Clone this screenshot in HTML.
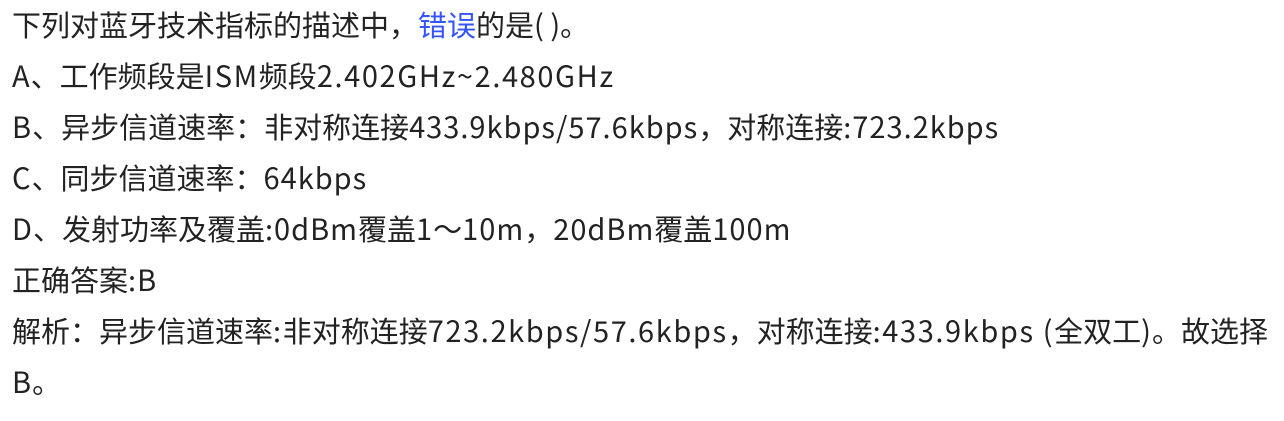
<!DOCTYPE html>
<html><head><meta charset="utf-8"><style>
html,body{margin:0;padding:0;background:#fff;width:1284px;height:421px;overflow:hidden}
body{font-family:"Noto Sans CJK SC","Liberation Sans",sans-serif;font-size:29px;color:#222;}
.w{position:absolute;left:12px;top:-1px;}
.l{height:51px;line-height:51px;white-space:nowrap}
.b{color:#3355ff}
.e{letter-spacing:1px}
.f{letter-spacing:1.6px}
</style></head><body><div class="w">
<div class="l">下列对蓝牙技术指标的描述中，<span class="b">错误</span>的是( )。</div>
<div class="l"><span class="e">A</span>、工作频段是<span class="f">ISM</span>频段<span class="f">2.402GHz~2.480GHz</span></div>
<div class="l"><span class="e">B</span>、异步信道速率：非对称连接<span class="e">433.9kbps/57.6kbps</span>，对称连接<span class="e">:723.2kbps</span></div>
<div class="l"><span class="e">C</span>、同步信道速率：<span class="e">64kbps</span></div>
<div class="l"><span class="e">D</span>、发射功率及覆盖<span class="e">:0dBm</span>覆盖<span class="e">1</span>～<span class="e">10m</span>，<span class="e">20dBm</span>覆盖<span class="e">100m</span></div>
<div class="l">正确答案<span class="e">:B</span></div>
<div class="l">解析：异步信道速率<span class="f">:</span>非对称连接<span class="f">723.2kbps/57.6kbps</span>，对称连接<span class="f">:433.9kbps (</span>全双工<span class="e">)</span>。故选择</div>
<div class="l"><span class="e">B</span>。</div>
</div></body></html>
